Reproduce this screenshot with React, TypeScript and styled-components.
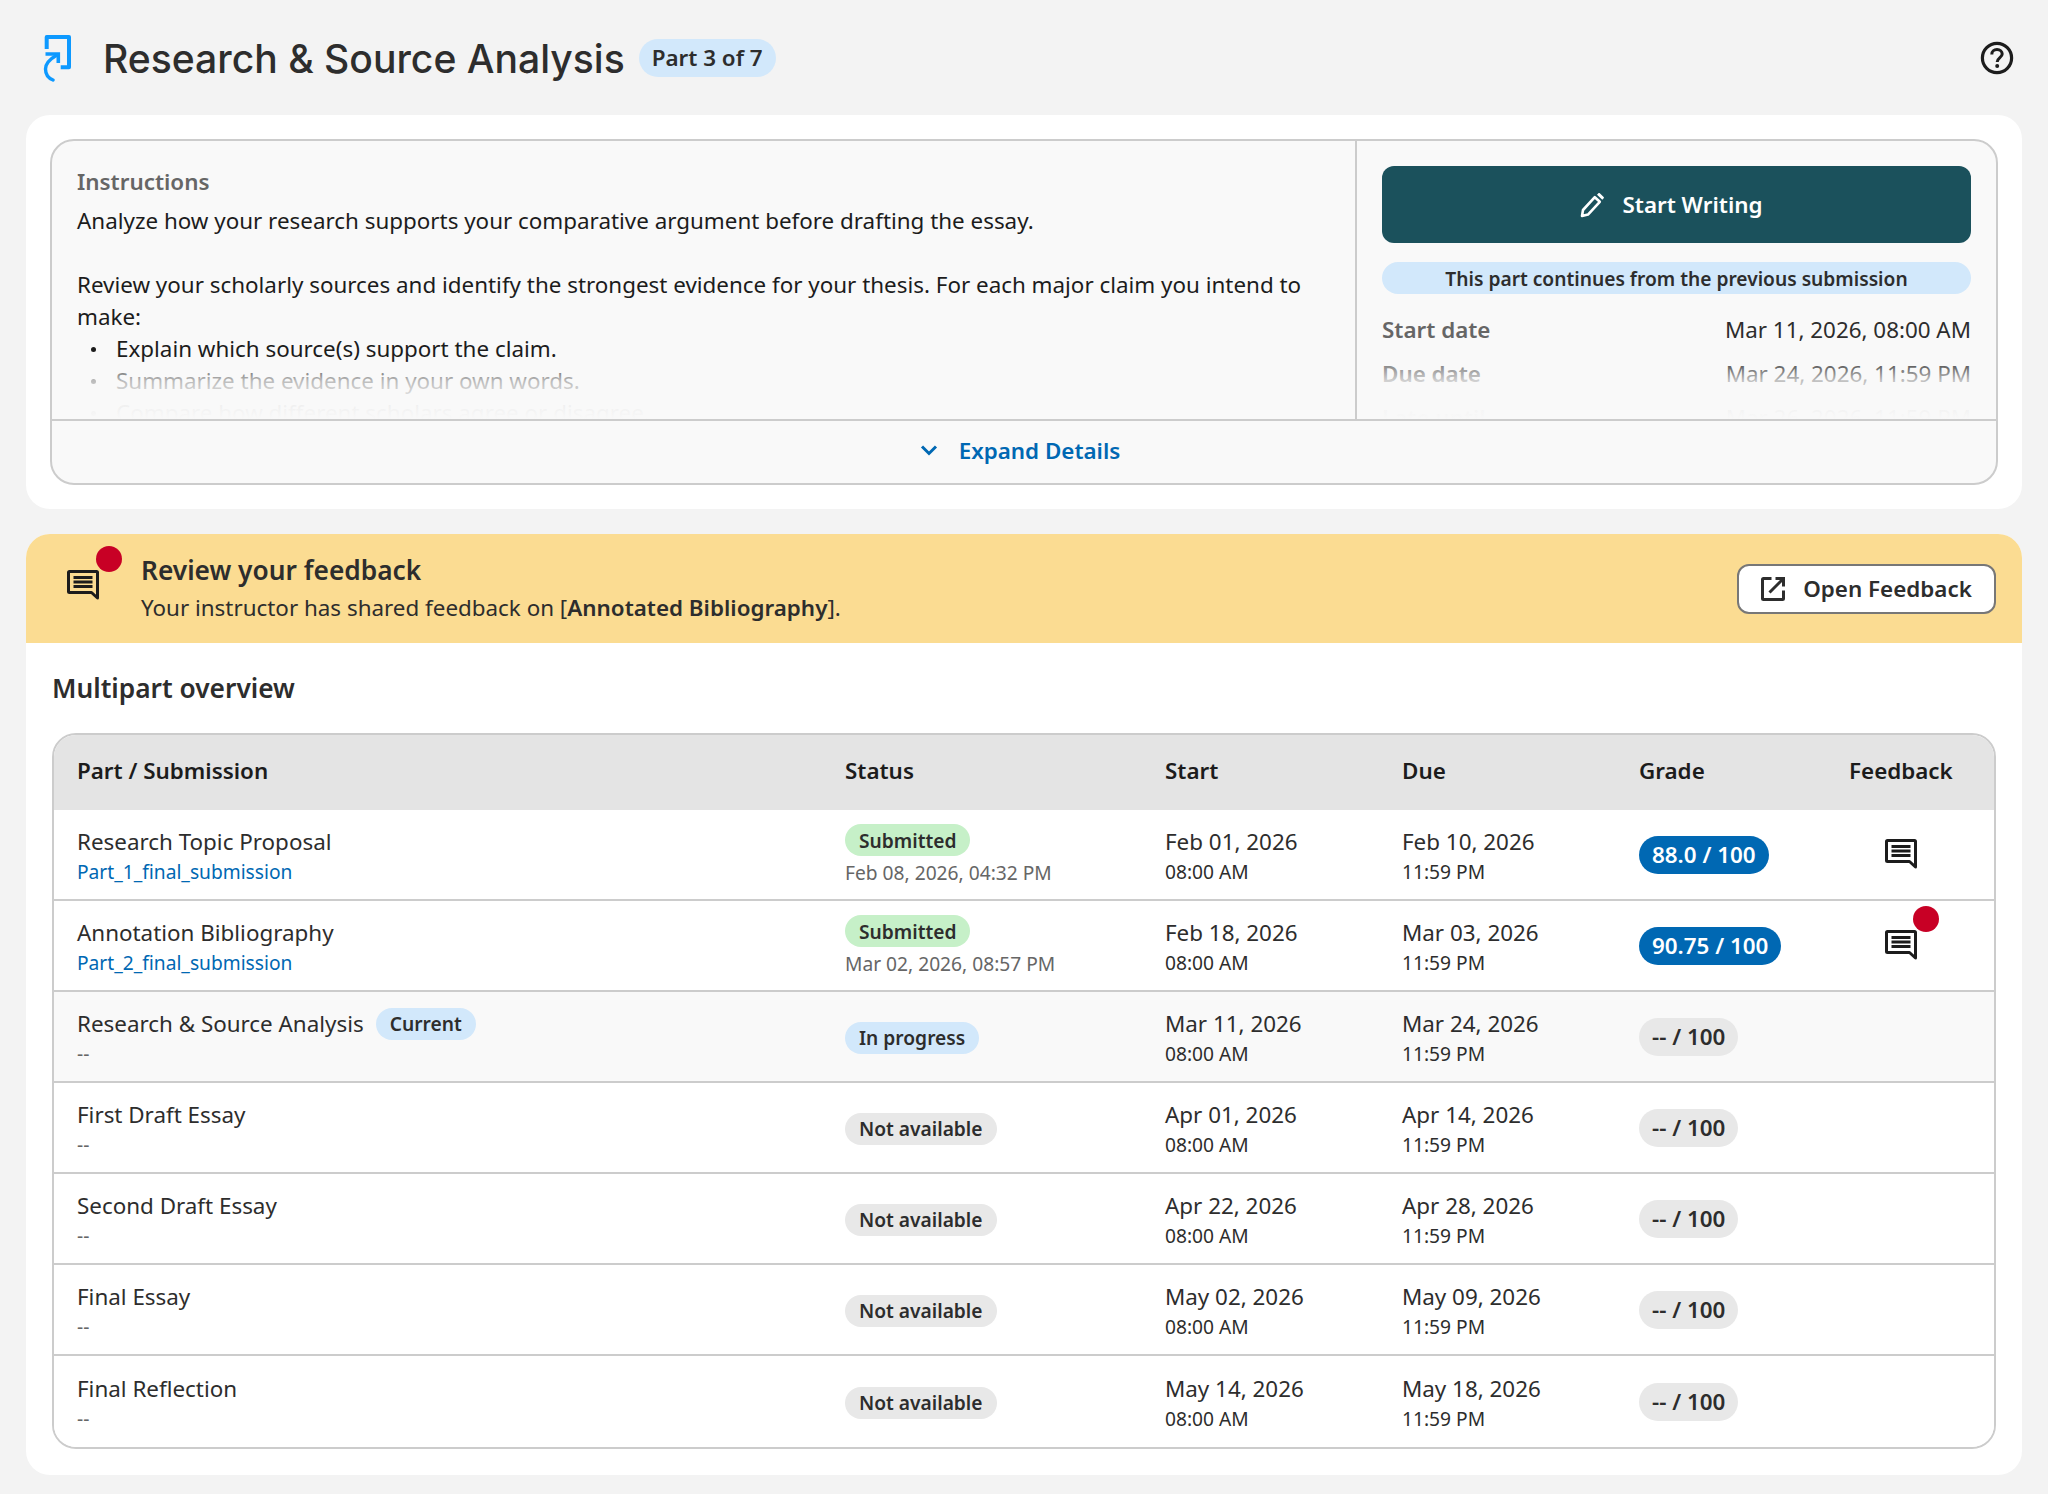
import React from "react";
import styled, { createGlobalStyle } from "styled-components";

const GlobalStyle = createGlobalStyle`
  html, body {
    margin: 0;
    padding: 0;
    background: #f3f3f3;
    color: #2d2d2d;
    font-family: "Noto Sans", "Open Sans", sans-serif;
  }
  * { box-sizing: border-box; }
`;

type Tone = "green" | "blue" | "gray";

interface PartRow {
  name: string;
  file?: string;
  status: string;
  tone: Tone;
  submitted?: string;
  current?: boolean;
  start: string;
  due: string;
  grade: string;
  graded?: boolean;
  feedback?: boolean;
  unread?: boolean;
}

const ROWS: PartRow[] = [
  {
    name: "Research Topic Proposal",
    file: "Part_1_final_submission",
    status: "Submitted",
    tone: "green",
    submitted: "Feb 08, 2026, 04:32 PM",
    start: "Feb 01, 2026",
    due: "Feb 10, 2026",
    grade: "88.0 / 100",
    graded: true,
    feedback: true,
  },
  {
    name: "Annotation Bibliography",
    file: "Part_2_final_submission",
    status: "Submitted",
    tone: "green",
    submitted: "Mar 02, 2026, 08:57 PM",
    start: "Feb 18, 2026",
    due: "Mar 03, 2026",
    grade: "90.75 / 100",
    graded: true,
    feedback: true,
    unread: true,
  },
  {
    name: "Research & Source Analysis",
    status: "In progress",
    tone: "blue",
    current: true,
    start: "Mar 11, 2026",
    due: "Mar 24, 2026",
    grade: "-- / 100",
  },
  {
    name: "First Draft Essay",
    status: "Not available",
    tone: "gray",
    start: "Apr 01, 2026",
    due: "Apr 14, 2026",
    grade: "-- / 100",
  },
  {
    name: "Second Draft Essay",
    status: "Not available",
    tone: "gray",
    start: "Apr 22, 2026",
    due: "Apr 28, 2026",
    grade: "-- / 100",
  },
  {
    name: "Final Essay",
    status: "Not available",
    tone: "gray",
    start: "May 02, 2026",
    due: "May 09, 2026",
    grade: "-- / 100",
  },
  {
    name: "Final Reflection",
    status: "Not available",
    tone: "gray",
    start: "May 14, 2026",
    due: "May 18, 2026",
    grade: "-- / 100",
  },
];

const TONES: Record<Tone, string> = {
  green: "#c6f0c8",
  blue: "#d2e8fb",
  gray: "#e8e8e8",
};

const CommentIcon = () => (
  <svg width="32" height="30" viewBox="0 0 32 30" fill="none">
    <path
      d="M2.5 1.5H29.5C30 1.5 30.5 2 30.5 2.5V28L24.5 22.5H2.5C2 22.5 1.5 22 1.5 21.5V2.5C1.5 2 2 1.5 2.5 1.5Z"
      stroke="#1c1c1c"
      strokeWidth="3"
      strokeLinejoin="round"
    />
    <path
      d="M6.5 7.5H25.5M6.5 12H25.5M6.5 16.5H25.5"
      stroke="#1c1c1c"
      strokeWidth="2.8"
    />
  </svg>
);

export default function App() {
  return (
    <>
      <GlobalStyle />
      <Page>
        <Header>
          <TitleGroup>
            <svg width="30" height="48" viewBox="0 0 30 48" fill="none">
              <path
                d="M3.7 15V3H26V33.3H17.7"
                stroke="#0d99ff"
                strokeWidth="4"
                strokeLinejoin="round"
              />
              <path d="M2.5 20H15.3V29" stroke="#0d99ff" strokeWidth="3.6" />
              <path
                d="M14 21C7 25 2.5 30 2.5 35C2.5 40 5 44 10 46"
                stroke="#0d99ff"
                strokeWidth="3.4"
                strokeLinecap="round"
              />
            </svg>
            <Title>Research &amp; Source Analysis</Title>
            <PartBadge>Part 3 of 7</PartBadge>
          </TitleGroup>
          <svg width="34" height="34" viewBox="0 0 34 34" fill="none">
            <circle cx="17" cy="17" r="14.6" stroke="#1c1c1c" strokeWidth="3.2" />
            <path
              d="M11.8 13.4C11.8 10.4 14 8.6 17 8.6C20 8.6 22.2 10.4 22.2 13C22.2 16.6 17.2 16.6 17.2 21"
              stroke="#1c1c1c"
              strokeWidth="3"
            />
            <circle cx="17.2" cy="25" r="2" fill="#1c1c1c" />
          </svg>
        </Header>

        <TopCard>
          <DetailsBox>
            <DetailsBody>
              <Instructions>
                <SectionLabel>Instructions</SectionLabel>
                <BodyText>
                  Analyze how your research supports your comparative argument
                  before drafting the essay.
                </BodyText>
                <BodyGap />
                <BodyText>
                  Review your scholarly sources and identify the strongest
                  evidence for your thesis. For each major claim you intend to
                  make:
                </BodyText>
                <BulletList>
                  <li>Explain which source(s) support the claim.</li>
                  <li>Summarize the evidence in your own words.</li>
                  <li>Compare how different scholars agree or disagree.</li>
                </BulletList>
                <Fade />
              </Instructions>
              <SidePanel>
                <StartButton>
                  <svg width="25" height="26" viewBox="0 0 25 26" fill="none">
                    <path
                      d="M2 24L3 18L14.8 5.2L19.8 9.8L8 22.6Z"
                      stroke="#fff"
                      strokeWidth="2.6"
                      strokeLinejoin="round"
                    />
                    <path
                      d="M17 2.8L18.4 1.3C18.8 0.9 19.4 0.9 19.8 1.3L23.7 4.9C24.1 5.3 24.1 5.9 23.7 6.3L22.3 7.8Z"
                      fill="#fff"
                    />
                  </svg>
                  Start Writing
                </StartButton>
                <ContinueNote>
                  This part continues from the previous submission
                </ContinueNote>
                <DateRow>
                  <DateLabel>Start date</DateLabel>
                  <DateValue>Mar 11, 2026, 08:00 AM</DateValue>
                </DateRow>
                <DateRow>
                  <DateLabel>Due date</DateLabel>
                  <DateValue>Mar 24, 2026, 11:59 PM</DateValue>
                </DateRow>
                <DateRow>
                  <DateLabel>Late until</DateLabel>
                  <DateValue>Mar 26, 2026, 11:59 PM</DateValue>
                </DateRow>
                <Fade />
              </SidePanel>
            </DetailsBody>
            <ExpandRow>
              <svg width="20" height="20" viewBox="0 0 20 20" fill="none">
                <path
                  d="M3 6.5L10 13.5L17 6.5"
                  stroke="#0068b3"
                  strokeWidth="3"
                />
              </svg>
              Expand Details
            </ExpandRow>
          </DetailsBox>
        </TopCard>

        <BottomCard>
          <Banner>
            <BannerIcon>
              <CommentIcon />
              <BannerDot />
            </BannerIcon>
            <BannerText>
              <BannerTitle>Review your feedback</BannerTitle>
              <BannerSub>
                Your instructor has shared feedback on [
                <strong>Annotated Bibliography</strong>].
              </BannerSub>
            </BannerText>
            <OpenButton>
              <svg width="24" height="24" viewBox="0 0 24 24" fill="none">
                <path
                  d="M10.5 1.5H2.5C1.9 1.5 1.5 1.9 1.5 2.5V21.5C1.5 22.1 1.9 22.5 2.5 22.5H21.5C22.1 22.5 22.5 22.1 22.5 21.5V13.5"
                  stroke="#2d2d2d"
                  strokeWidth="3"
                />
                <path
                  d="M14.5 1.5H22.5V9.5M21.5 2.5L8.5 15.5"
                  stroke="#2d2d2d"
                  strokeWidth="3"
                />
              </svg>
              Open Feedback
            </OpenButton>
          </Banner>

          <Overview>
            <OverviewTitle>Multipart overview</OverviewTitle>
            <Table>
              <HeadRow>
                <PartHeadCell>Part / Submission</PartHeadCell>
                <HeadCell>Status</HeadCell>
                <HeadCell>Start</HeadCell>
                <HeadCell>Due</HeadCell>
                <HeadCell>Grade</HeadCell>
                <FeedbackHeadCell>Feedback</FeedbackHeadCell>
              </HeadRow>
              {ROWS.map((row) => (
                <Row key={row.name} $current={row.current}>
                  <PartCell>
                    <NameLine>
                      <PartName>{row.name}</PartName>
                      {row.current && <Pill $tone="blue">Current</Pill>}
                    </NameLine>
                    {row.file ? (
                      <FileLink>{row.file}</FileLink>
                    ) : (
                      <NoFile>--</NoFile>
                    )}
                  </PartCell>
                  <Cell>
                    <StatusStack>
                      <Pill $tone={row.tone}>{row.status}</Pill>
                      {row.submitted && (
                        <SubmittedAt>{row.submitted}</SubmittedAt>
                      )}
                    </StatusStack>
                  </Cell>
                  <Cell>
                    <DateMain>{row.start}</DateMain>
                    <DateTime>08:00 AM</DateTime>
                  </Cell>
                  <Cell>
                    <DateMain>{row.due}</DateMain>
                    <DateTime>11:59 PM</DateTime>
                  </Cell>
                  <GradeCell>
                    <GradePill $graded={row.graded}>{row.grade}</GradePill>
                  </GradeCell>
                  <FeedbackCell>
                    {row.feedback && (
                      <FeedbackIcon>
                        <CommentIcon />
                        {row.unread && <RowDot />}
                      </FeedbackIcon>
                    )}
                  </FeedbackCell>
                </Row>
              ))}
            </Table>
          </Overview>
        </BottomCard>
      </Page>
    </>
  );
}

const Page = styled.div`
  width: 2048px;
  height: 1494px;
  padding: 0 26px;
`;

const Header = styled.header`
  height: 115px;
  padding: 0 8px 0 17px;
  display: flex;
  align-items: center;
  justify-content: space-between;
`;

const TitleGroup = styled.div`
  display: flex;
  align-items: center;
`;

const Title = styled.h1`
  margin: 0 14px 0 30px;
  padding-top: 2px;
  font-family: Inter, "Noto Sans", sans-serif;
  font-size: 39.1px;
  font-weight: 500;
  color: #2d2d2d;
`;

const PartBadge = styled.span`
  height: 38px;
  padding: 0 13px;
  display: inline-flex;
  align-items: center;
  border-radius: 19px;
  background: #d2e8fb;
  font-size: 22.4px;
  font-weight: 600;
`;

const TopCard = styled.section`
  height: 394px;
  padding: 24px;
  background: #fff;
  border-radius: 24px;
`;

const DetailsBox = styled.div`
  height: 346px;
  display: flex;
  flex-direction: column;
  background: #f9f9f9;
  border: 2px solid #ccc;
  border-radius: 24px;
  overflow: hidden;
`;

const DetailsBody = styled.div`
  height: 280px;
  display: flex;
  border-bottom: 2px solid #ccc;
`;

const Instructions = styled.div`
  position: relative;
  width: 1305px;
  padding: 25px 24px 0 25px;
  overflow: hidden;
  border-right: 2px solid #ccc;
`;

const SectionLabel = styled.div`
  font-size: 22.4px;
  line-height: 32px;
  font-weight: 600;
  color: #666;
  margin-bottom: 7px;
`;

const BodyText = styled.p`
  margin: 0;
  font-size: 22.4px;
  line-height: 32px;
  color: #1c1c1c;
`;

const BodyGap = styled.div`
  height: 32px;
`;

const BulletList = styled.ul`
  margin: 0;
  padding-left: 39px;
  list-style: none;
  font-size: 22.4px;
  line-height: 32px;
  color: #1c1c1c;

  li {
    position: relative;
  }

  li::before {
    content: "";
    position: absolute;
    left: -25px;
    top: 14px;
    width: 5px;
    height: 5px;
    border-radius: 50%;
    background: currentColor;
  }
`;

const Fade = styled.div`
  position: absolute;
  left: 0;
  right: 0;
  bottom: 0;
  height: 58px;
  background: linear-gradient(
    to bottom,
    rgba(249, 249, 249, 0.1),
    rgba(249, 249, 249, 0.72) 34%,
    rgba(249, 249, 249, 0.95) 72%,
    #f9f9f9 100%
  );
  pointer-events: none;
`;

const SidePanel = styled.div`
  position: relative;
  flex: 1;
  padding: 25px 25px 0;
  overflow: hidden;
`;

const StartButton = styled.button`
  width: 100%;
  height: 77px;
  padding: 0 10px 0 0;
  display: flex;
  align-items: center;
  justify-content: center;
  gap: 17px;
  border: none;
  border-radius: 12px;
  background: #1b515c;
  color: #fff;
  font-family: inherit;
  font-size: 22.4px;
  font-weight: 600;
`;

const ContinueNote = styled.div`
  height: 32px;
  margin: 19px 0 13px;
  display: flex;
  align-items: center;
  justify-content: center;
  border-radius: 16px;
  background: #d2e8fb;
  font-size: 19.2px;
  font-weight: 600;
`;

const DateRow = styled.div`
  height: 44px;
  display: flex;
  align-items: center;
  justify-content: space-between;
  font-size: 22.4px;
`;

const DateLabel = styled.span`
  font-weight: 600;
  color: #666;
`;

const DateValue = styled.span`
  color: #2d2d2d;
`;

const ExpandRow = styled.div`
  flex: 1;
  padding: 0 9px 4px 0;
  display: flex;
  align-items: center;
  justify-content: center;
  gap: 20px;
  font-size: 22.4px;
  font-weight: 600;
  color: #0068b3;
`;

const BottomCard = styled.section`
  margin-top: 25px;
  height: 941px;
  background: #fff;
  border-radius: 24px;
  overflow: hidden;
`;

const Banner = styled.div`
  height: 109px;
  padding: 0 26px 0 41px;
  display: flex;
  align-items: center;
  background: #fbdc92;
`;

const BannerIcon = styled.div`
  position: relative;
  width: 32px;
  height: 30px;
  margin-right: 42px;
  margin-bottom: 7px;
`;

const BannerDot = styled.span`
  position: absolute;
  top: -24px;
  left: 29px;
  width: 26px;
  height: 26px;
  border-radius: 50%;
  background: #c80025;
`;

const BannerText = styled.div`
  flex: 1;
`;

const BannerTitle = styled.div`
  font-size: 26.3px;
  line-height: 36px;
  font-weight: 600;
`;

const BannerSub = styled.div`
  margin-top: 2px;
  font-size: 22.4px;
  line-height: 36px;

  strong {
    font-weight: 600;
  }
`;

const OpenButton = styled.button`
  width: 259px;
  height: 50px;
  display: flex;
  align-items: center;
  justify-content: center;
  gap: 18px;
  background: #fff;
  border: 2px solid #777;
  border-radius: 12px;
  color: #2d2d2d;
  font-family: inherit;
  font-size: 22.4px;
  font-weight: 600;
`;

const Overview = styled.div`
  padding: 0 26px;
`;

const OverviewTitle = styled.h2`
  margin: 0;
  height: 90px;
  display: flex;
  align-items: center;
  font-size: 26.3px;
  font-weight: 600;
`;

const Table = styled.div`
  border: 2px solid #ccc;
  border-radius: 24px;
  overflow: hidden;
`;

const COLUMNS = "767px 320px 237px 237px 211px 1fr";

const HeadRow = styled.div`
  height: 75px;
  padding-bottom: 5px;
  display: grid;
  grid-template-columns: ${COLUMNS};
  align-items: center;
  background: #e4e4e4;
`;

const HeadCell = styled.div`
  padding-left: 24px;
  font-size: 22.4px;
  font-weight: 600;
  color: #1c1c1c;
`;

const PartHeadCell = styled(HeadCell)`
  padding-left: 23px;
`;

const FeedbackHeadCell = styled(HeadCell)`
  padding-left: 23px;
`;

const Row = styled.div<{ $current?: boolean }>`
  height: 91px;
  display: grid;
  grid-template-columns: ${COLUMNS};
  align-items: center;
  background: ${(p) => (p.$current ? "#f9f9f9" : "#fff")};
  border-bottom: 2px solid #ccc;

  &:last-child {
    border-bottom: none;
  }
`;

const Cell = styled.div`
  padding: 2px 0 0 24px;
`;

const PartCell = styled(Cell)`
  padding-left: 23px;
`;

const GradeCell = styled.div`
  padding-left: 24px;
`;

const FeedbackCell = styled.div`
  display: flex;
  justify-content: center;
  padding: 0 18px 2px 0;
`;

const NameLine = styled.div`
  display: flex;
  align-items: center;
  gap: 12px;
`;

const PartName = styled.span`
  font-size: 22.4px;
  line-height: 32px;
  color: #2d2d2d;
`;

const FileLink = styled.div`
  font-size: 19.2px;
  line-height: 28px;
  color: #0068b3;
`;

const NoFile = styled.div`
  font-size: 19.2px;
  line-height: 28px;
  color: #666;
`;

const StatusStack = styled.div`
  display: flex;
  flex-direction: column;
  align-items: flex-start;
  gap: 3px;
`;

const Pill = styled.span<{ $tone: Tone }>`
  height: 32px;
  padding: 0 14px;
  display: inline-flex;
  align-items: center;
  border-radius: 16px;
  background: ${(p) => TONES[p.$tone]};
  font-size: 19.2px;
  font-weight: 600;
  color: #2d2d2d;
`;

const SubmittedAt = styled.span`
  font-size: 19.2px;
  line-height: 28px;
  color: #666;
`;

const DateMain = styled.div`
  font-size: 22.4px;
  line-height: 32px;
  color: #2d2d2d;
`;

const DateTime = styled.div`
  font-size: 19.2px;
  line-height: 28px;
  color: #2d2d2d;
`;

const GradePill = styled.span<{ $graded?: boolean }>`
  height: 38px;
  padding: 0 13px;
  display: inline-flex;
  align-items: center;
  border-radius: 19px;
  background: ${(p) => (p.$graded ? "#0068b3" : "#e8e8e8")};
  color: ${(p) => (p.$graded ? "#fff" : "#2d2d2d")};
  font-size: 22.4px;
  font-weight: 600;
`;

const FeedbackIcon = styled.div`
  position: relative;
  width: 32px;
  height: 30px;
`;

const RowDot = styled.span`
  position: absolute;
  top: -24px;
  left: 28px;
  width: 26px;
  height: 26px;
  border-radius: 50%;
  background: #c80025;
`;
